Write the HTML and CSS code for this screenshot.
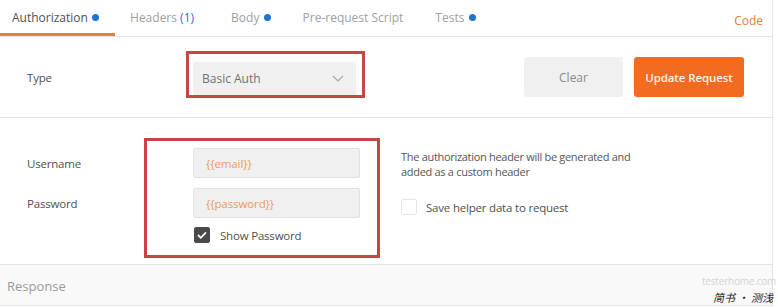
FILE: index.html
```html
<!DOCTYPE html>
<html lang="en">
<head>
    <meta charset="UTF-8">
    <title>Authorization</title>
    <link rel="stylesheet" href="styles.css">
</head>
<body>
    <div class="panel">
        <!-- Request tabs -->
        <div class="tabs">
            <div class="tab active">Authorization <span class="dot"></span></div>
            <div class="tab tab-headers">Headers <span class="count">(1)</span></div>
            <div class="tab">Body <span class="dot"></span></div>
            <div class="tab">Pre-request Script</div>
            <div class="tab">Tests <span class="dot"></span></div>
            <div class="code-link">Code</div>
        </div>

        <!-- Auth type -->
        <div class="type-row">
            <label class="field-label">Type</label>
            <div class="select">
                <span>Basic Auth</span>
                <svg width="12" height="7" viewBox="0 0 12 7"><path d="M1 1l5 5 5-5" fill="none" stroke="#a8a8a8" stroke-width="1.2"/></svg>
            </div>
            <div class="actions">
                <button class="btn btn-clear">Clear</button>
                <button class="btn btn-update">Update Request</button>
            </div>
        </div>

        <!-- Credentials -->
        <div class="creds">
            <div class="creds-form">
                <div class="form-row">
                    <label class="field-label">Username</label>
                    <div class="input">{{email}}</div>
                </div>
                <div class="form-row">
                    <label class="field-label">Password</label>
                    <div class="input">{{password}}</div>
                </div>
                <div class="form-row check-row">
                    <span class="checkbox checked">
                        <svg width="10" height="8" viewBox="0 0 10 8"><path d="M1 4l2.8 2.8L9 1.4" fill="none" stroke="#fff" stroke-width="1.8"/></svg>
                    </span>
                    <span class="check-label">Show Password</span>
                </div>
            </div>
            <div class="creds-help">
                <p>The authorization header will be generated and<br>added as a custom header</p>
                <div class="check-row">
                    <span class="checkbox"></span>
                    <span class="check-label">Save helper data to request</span>
                </div>
            </div>
        </div>

        <div class="response">Response</div>
    </div>

    <!-- annotations over the screenshot -->
    <div class="mark mark-type"></div>
    <div class="mark mark-creds"></div>
    <div class="watermark">
        <span class="wm-site">testerhome.com</span>
        <span class="wm-cn">简书 • 测浅</span>
    </div>
</body>
</html>
```

FILE: styles.css
```css
* {
    margin: 0;
    padding: 0;
    box-sizing: border-box;
}
body {
    font-family: "Open Sans", Arial, sans-serif;
    font-size: 12px;
    color: #505050;
    background: #fff;
    position: relative;
    width: 778px;
    height: 307px;
    overflow: hidden;
}
.panel {
    width: 773px;
    border-right: 1px solid #e3e3e3;
}

/* ============= Tabs ========= */
.tabs {
    display: flex;
    align-items: stretch;
    height: 37px;
    border-bottom: 1px solid #e3e3e3;
}
.tab {
    display: flex;
    align-items: center;
    padding: 0 17px 0 15px;
    color: #a0a0a0;
    font-size: 12px;
    white-space: pre;
    border-bottom: 3px solid transparent;
    padding-top: 2px;
}
.tab.active {
    color: #505050;
    padding-left: 12px;
    padding-right: 16px;
    border-bottom-color: #e8803a;
}
.tab-headers {
    padding-right: 22px;
}
.dot {
    display: inline-block;
    width: 7px;
    height: 7px;
    border-radius: 50%;
    background: #1e73d6;
    margin-left: 1px;
}
.count {
    color: #1e73d6;
}
.code-link {
    margin-left: auto;
    padding: 4px 9px 0 0;
    display: flex;
    align-items: center;
    color: #e0803a;
}

/* ============= Type row ========= */
.type-row {
    display: flex;
    align-items: center;
    height: 81px;
    padding: 0 28px 0 27px;
    border-bottom: 1px solid #e3e3e3;
}
.field-label {
    width: 166px;
    color: #505050;
    font-size: 11.5px;
    letter-spacing: -0.2px;
}
.select {
    display: flex;
    align-items: center;
    justify-content: space-between;
    width: 163px;
    height: 33px;
    margin-top: 3px;
    padding: 0 12px 0 9px;
    background: #f0f0f0;
    border-radius: 2px;
    color: #707070;
}
.actions {
    margin-left: auto;
    display: flex;
    gap: 11px;
}
.btn {
    font-family: inherit;
    font-size: 12px;
    height: 40px;
    border: none;
    border-radius: 3px;
}
.btn-clear {
    width: 99px;
    background: #f0f0f0;
    color: #8a8a8a;
}
.btn-update {
    width: 110px;
    background: #f26b1f;
    color: #fff3ea;
    font-weight: 600;
    font-size: 11.5px;
    letter-spacing: -0.1px;
}

/* ============= Credentials ========= */
.creds {
    display: flex;
    height: 147px;
    padding: 30px 0 0 27px;
    border-bottom: 1px solid #e3e3e3;
}
.creds-form {
    width: 374px;
}
.form-row {
    display: flex;
    align-items: center;
    margin-bottom: 10px;
}
.input {
    width: 167px;
    height: 30px;
    display: flex;
    align-items: center;
    padding-left: 12px;
    background: #f0f0f0;
    border: 1px solid #e2e2e2;
    border-radius: 2px;
    color: #ee9a5c;
    font-size: 11.5px;
    letter-spacing: -0.1px;
}
.check-row {
    display: flex;
    align-items: center;
}
.creds-form .check-row {
    margin-top: -1px;
    padding-left: 167px;
}
.checkbox {
    width: 16px;
    height: 16px;
    border: 1px solid #e4e4e4;
    border-radius: 2px;
    display: flex;
    align-items: center;
    justify-content: center;
    background: #fff;
}
.checkbox.checked {
    background: #4a4a4a;
    border-color: #4a4a4a;
}
.check-label {
    margin-left: 10px;
    color: #505050;
    font-size: 11.5px;
    letter-spacing: -0.2px;
}
.creds-help {
    padding-top: 1px;
}
.creds-help p {
    font-size: 11px;
    line-height: 15px;
    letter-spacing: -0.3px;
    color: #555;
    margin-bottom: 20px;
}
.creds-help .check-label {
    margin-left: 9px;
}

/* ============= Response ========= */
.response {
    height: 41px;
    display: flex;
    align-items: center;
    padding: 2px 0 0 7px;
    font-size: 13px;
    color: #9a9a9a;
    background: #f9f9f9;
    border-bottom: 1px solid #e3e3e3;
}

/* ============= Annotations ========= */
.mark {
    position: absolute;
    border: 3px solid #c94545;
}
.mark-type {
    left: 186px;
    top: 51px;
    width: 179px;
    height: 47px;
}
.mark-creds {
    left: 144px;
    top: 138px;
    width: 236px;
    height: 120px;
}
.watermark {
    position: absolute;
    left: 702px;
    top: 275px;
}
.wm-site {
    display: block;
    font-size: 10px;
    line-height: 13px;
    color: #d4d4d4;
    letter-spacing: -0.2px;
    white-space: nowrap;
}
.wm-cn {
    position: absolute;
    left: 11px;
    top: 16px;
    font-family: "Noto Sans CJK SC", sans-serif;
    font-size: 11px;
    font-style: italic;
    line-height: 13px;
    color: #222;
    white-space: nowrap;
}
```
